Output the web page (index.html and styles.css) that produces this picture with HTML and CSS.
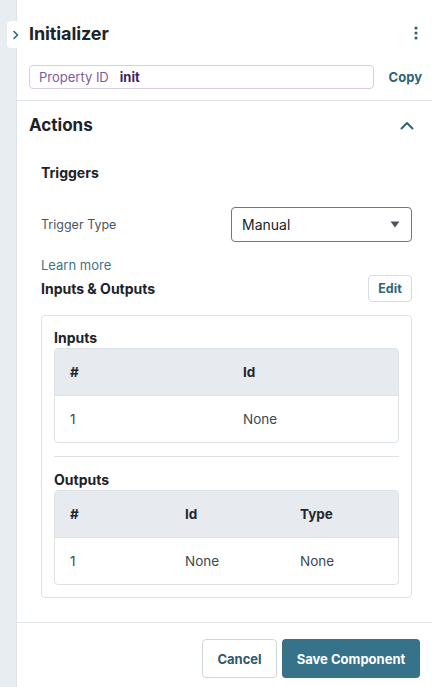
FILE: index.html
```html
<!DOCTYPE html>
<html>
<head>
<meta charset="utf-8">
<link rel="stylesheet" href="styles.css">
</head>
<body>
<div class="app">
  <div class="rail"></div>
  <div class="tab">
    <svg width="8" height="10" viewBox="0 0 8 10"><path d="M2 1.5 L5.5 5 L2 8.5" fill="none" stroke="#2f6478" stroke-width="1.6" stroke-linecap="round" stroke-linejoin="round"/></svg>
  </div>
  <div class="panel">
    <div class="header">
      <div class="title-row">
        <h1 class="title">Initializer</h1>
        <svg class="kebab" width="4" height="14" viewBox="0 0 4 14"><circle cx="2" cy="2" r="1.6" fill="#2f6478"/><circle cx="2" cy="7" r="1.6" fill="#2f6478"/><circle cx="2" cy="12" r="1.6" fill="#2f6478"/></svg>
      </div>
      <div class="prop-row">
        <div class="prop-input"><span class="prop-label">Property ID</span><span class="prop-value">init</span></div>
        <span class="copy">Copy</span>
      </div>
    </div>
    <div class="section">
      <div class="section-head">
        <h2 class="section-title">Actions</h2>
        <svg width="14" height="9" viewBox="0 0 14 9"><path d="M1.5 7.5 L7 2 L12.5 7.5" fill="none" stroke="#2f6478" stroke-width="2" stroke-linecap="round" stroke-linejoin="round"/></svg>
      </div>
      <div class="section-body">
        <h3 class="sub-title">Triggers</h3>
        <div class="field-row">
          <span class="field-label">Trigger Type</span>
          <div class="select"><span>Manual</span><svg width="10" height="7" viewBox="0 0 10 7"><path d="M0.5 0.5 H9.5 L5 6.5 Z" fill="#4a5560"/></svg></div>
        </div>
        <a class="learn">Learn more</a>
        <div class="io-row">
          <h3 class="sub-title">Inputs &amp; Outputs</h3>
          <span class="btn-edit">Edit</span>
        </div>
        <div class="card">
          <h4 class="card-title">Inputs</h4>
          <div class="table">
            <div class="tr th cols2"><span>#</span><span>Id</span></div>
            <div class="tr cols2"><span>1</span><span>None</span></div>
          </div>
          <div class="divider"></div>
          <h4 class="card-title">Outputs</h4>
          <div class="table">
            <div class="tr th cols3"><span>#</span><span>Id</span><span>Type</span></div>
            <div class="tr cols3"><span>1</span><span>None</span><span>None</span></div>
          </div>
        </div>
      </div>
    </div>
    <div class="footer">
      <span class="btn btn-cancel">Cancel</span>
      <span class="btn btn-save">Save Component</span>
    </div>
  </div>
</div>
</body>
</html>
```
FILE: styles.css
```css
* { box-sizing: border-box; }
html, body { margin: 0; padding: 0; }
body {
  font-family: Inter, "Liberation Sans", sans-serif;
  color: #1c2329;
  background: #fff;
}
.app {
  display: flex;
  min-height: 687px;
  position: relative;
}
.rail {
  width: 17px;
  flex: none;
  background: #e8edf1;
  border-right: 1px solid #dde3e8;
}
.tab {
  position: absolute;
  left: 7px;
  top: 21px;
  width: 14px;
  height: 27px;
  background: #fff;
  border-radius: 4px 0 0 4px;
  display: flex;
  align-items: center;
  justify-content: center;
  padding-left: 3px;
}
.panel {
  flex: 1;
  display: flex;
  flex-direction: column;
}
.header {
  padding: 20px 10px 11px 12px;
  border-bottom: 1px solid #e2e6ea;
}
.title-row {
  height: 26px;
  display: flex;
  align-items: center;
  justify-content: space-between;
  padding-right: 4px;
}
.title {
  margin: 0;
  font-size: 18px;
  font-weight: 700;
  letter-spacing: -0.1px;
}
.prop-row {
  margin-top: 19px;
  display: flex;
  align-items: center;
  gap: 15px;
}
.prop-input {
  flex: 1;
  height: 24px;
  border: 1px solid #d9cbe6;
  border-radius: 4px;
  display: flex;
  align-items: center;
  padding-left: 9px;
  font-size: 13px;
}
.prop-label { color: #7c5c9b; }
.prop-value { color: #3f2260; font-weight: 700; margin-left: 11px; }
.copy {
  color: #2f6478;
  font-weight: 700;
  font-size: 13px;
}
.section-head {
  height: 24px;
  margin-top: 12px;
  display: flex;
  align-items: center;
  justify-content: space-between;
  padding: 0 18px 0 12px;
}
.section-title {
  margin: 0;
  font-size: 17px;
  font-weight: 700;
}
.section-body {
  padding: 0 20px 0 24px;
}
.sub-title {
  margin: 0;
  font-size: 14px;
  font-weight: 700;
}
.section-body > .sub-title {
  margin-top: 27px;
  line-height: 18px;
}
.field-row {
  margin-top: 25px;
  display: flex;
  align-items: center;
  justify-content: space-between;
}
.field-label {
  font-size: 12.5px;
  color: #4c5661;
}
.select {
  width: 181px;
  height: 35px;
  border: 1px solid #6f7780;
  border-radius: 4px;
  display: flex;
  align-items: center;
  justify-content: space-between;
  padding: 0 11px 0 10px;
  font-size: 14px;
}
.learn {
  display: block;
  margin-top: 15px;
  font-size: 13px;
  color: #3f7488;
  line-height: 16px;
}
.io-row {
  margin-top: 2px;
  height: 27px;
  display: flex;
  align-items: center;
  justify-content: space-between;
}
.btn-edit {
  height: 27px;
  width: 44px;
  border: 1px solid #d6dce1;
  border-radius: 4px;
  display: flex;
  align-items: center;
  justify-content: center;
  font-size: 12.5px;
  font-weight: 700;
  color: #2f6478;
}
.card {
  margin-top: 13px;
  border: 1px solid #dde2e6;
  border-radius: 4px;
  padding: 11px 12px 12px 12px;
}
.card-title {
  margin: 0;
  font-size: 14px;
  font-weight: 700;
  line-height: 21px;
  height: 21px;
}
.table {
  border: 1px solid #dde2e6;
  border-radius: 4px;
  overflow: hidden;
}
.tr {
  display: grid;
  height: 47px;
  align-items: center;
  padding-left: 15px;
  font-size: 13.5px;
  color: #3d4750;
}
.tr + .tr { border-top: 1px solid #dde2e6; }
.th {
  background: #e7ebef;
  font-weight: 700;
  color: #1f272e;
  height: 46px;
}
.cols2 { grid-template-columns: 173px 1fr; }
.cols3 { grid-template-columns: 115px 115px 1fr; }
.divider {
  height: 1px;
  background: #dde2e6;
  margin: 13px 0 12px;
}
.footer {
  margin-top: 24px;
  border-top: 1px solid #e2e6ea;
  padding: 16px 12px 0 0;
  display: flex;
  justify-content: flex-end;
  gap: 5px;
}
.btn {
  height: 39px;
  border-radius: 4px;
  display: flex;
  align-items: center;
  justify-content: center;
  font-size: 13px;
  font-weight: 700;
}
.btn-cancel {
  width: 75px;
  border: 1px solid #d0d7dc;
  color: #34576a;
}
.btn-save {
  width: 138px;
  background: #36728a;
  color: #fff;
}
```
